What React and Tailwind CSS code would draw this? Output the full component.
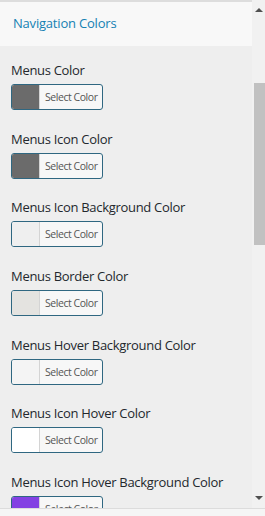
import React from "react";

const items = [
  { label: "Menus Color", color: "#6b6b6b" },
  { label: "Menus Icon Color", color: "#6b6b6b" },
  { label: "Menus Icon Background Color", color: "#efefef" },
  { label: "Menus Border Color", color: "#e4e3e0" },
  { label: "Menus Hover Background Color", color: "#f4f4f4" },
  { label: "Menus Icon Hover Color", color: "#ffffff" },
  { label: "Menus Icon Hover Background Color", color: "#8341e3" },
];

function ColorField({ label, color }) {
  return (
    <div className="flex flex-col shrink-0">
      <div className="h-5 leading-5 text-[13px] tracking-[-0.3px] text-[#23282d] whitespace-nowrap">{label}</div>
      <button className="mt-1 flex h-[26px] w-[92px] overflow-hidden rounded-[3px] border border-[#2f6781] bg-[#f7f7f7] text-left">
        <span className="h-full w-[28px] shrink-0 border-r border-[#d4d4d4]" style={{ backgroundColor: color }} />
        <span className="whitespace-nowrap pl-[5px] text-[10.5px] leading-[24px] tracking-[-0.45px] text-[#555]">Select Color</span>
      </button>
    </div>
  );
}

export default function App() {
  return (
    <div className="flex h-[516px] w-[265px] flex-col overflow-hidden bg-[#f1f1f1] font-['Open_Sans',sans-serif]">
      <div className="flex h-[508px] shrink-0">
        <div className="flex w-[252px] flex-col overflow-hidden border-t-2 border-[#dddddd] bg-[#eeeeee]">
          <div className="flex h-[44px] shrink-0 items-center bg-[#f8f8f8] pl-[13px] text-[13px] tracking-[-0.2px] text-[#1581b3]">
            Navigation Colors
          </div>
          <div className="flex flex-col gap-[18.7px] pl-[11px] pt-[14px]">
            {items.map((it) => (
              <ColorField key={it.label} {...it} />
            ))}
          </div>
        </div>
        <div className="flex w-[13px] flex-col items-center bg-[#f1f1f1]">
          <div className="mt-[8px] h-0 w-0 border-x-[4px] border-b-[4px] border-x-transparent border-b-[#505050]" />
          <div className="mt-[71px] ml-[2px] h-[162px] w-[11px] bg-[#c1c1c1]" />
          <div className="flex-1" />
          <div className="mb-[8px] h-0 w-0 border-x-[4px] border-t-[4px] border-x-transparent border-t-[#505050]" />
        </div>
      </div>
      <div className="flex-1 border-t border-[#dcdcdc] bg-[#f5f5f5]" />
    </div>
  );
}
